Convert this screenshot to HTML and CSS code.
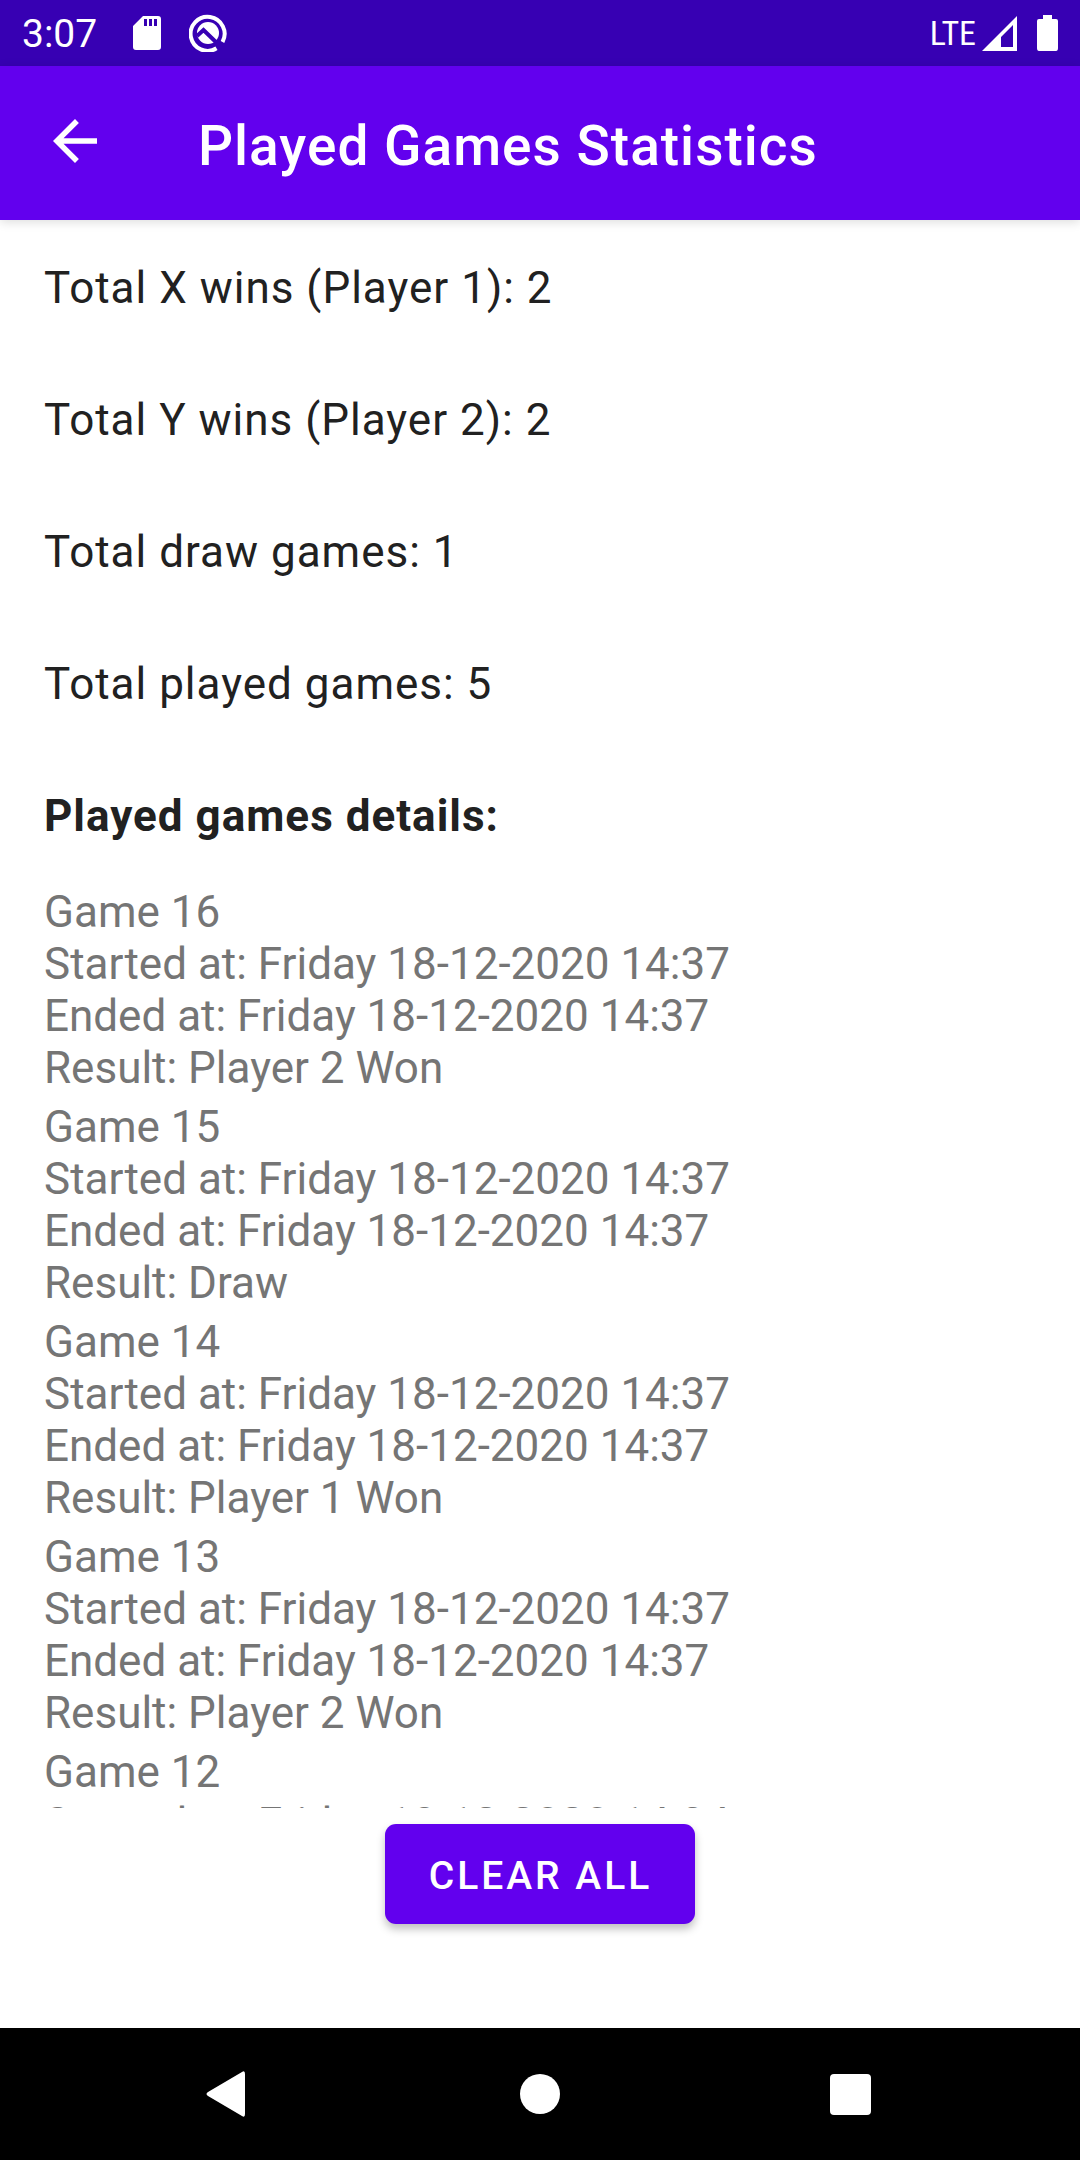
FILE: index.html
```html
<!DOCTYPE html>
<html lang="en">
<head>
<meta charset="utf-8">
<meta name="viewport" content="width=device-width, initial-scale=1">
<title>Played Games Statistics</title>
<link rel="stylesheet" href="styles.css">
</head>
<body>
<div class="status-bar">
  <div class="status-group">
    <span class="clock">3:07</span>
    <svg class="sd-icon" width="28" height="36" viewBox="0 0 28 36" aria-hidden="true"><path fill="#fff" fill-rule="evenodd" d="M10 1H25Q28 1 28 4V32Q28 35 25 35H3Q0 35 0 32V11ZM11 4V11H14V4ZM16 4V11H19V4ZM21 4V11H24V4Z"/></svg>
    <svg width="38" height="38" viewBox="0 0 38 38" aria-hidden="true"><path d="M27.500 34.300A17 17 0 1 1 33.500 28" fill="none" stroke="#fff" stroke-width="4"/><circle cx="19" cy="19" r="11" fill="#fff"/><path d="M8 22L14.500 16L31 32" fill="none" stroke="#3700b3" stroke-width="4"/></svg>
  </div>
  <div class="status-group status-right">
    <span class="network">LTE</span>
    <svg class="signal-icon" width="35" height="35" viewBox="0 0 35 35" aria-hidden="true"><path fill="#fff" fill-rule="evenodd" d="M35 0V35H0ZM31 9L19 21V31H31Z"/></svg>
    <svg width="21" height="36" viewBox="0 0 21 36" aria-hidden="true"><path fill="#fff" d="M6 0H15V4H19Q21 4 21 6V33Q21 36 19 36H2Q0 36 0 33V6Q0 4 2 4H6Z"/></svg>
  </div>
</div>
<header class="app-bar">
  <button class="icon-button" type="button" aria-label="Back"><svg width="66" height="66" viewBox="0 0 24 24" aria-hidden="true"><path fill="#fff" d="M20 11H7.83l5.59-5.59L12 4l-8 8 8 8 1.41-1.41L7.83 13H20z"/></svg></button>
  <h1 class="title">Played Games Statistics</h1>
</header>
<main class="content">
  <div class="totals">
    <p>Total X wins (Player 1): 2</p>
    <p>Total Y wins (Player 2): 2</p>
    <p>Total draw games: 1</p>
    <p>Total played games: 5</p>
    <h2>Played games details:</h2>
  </div>
  <ul class="games">
    <li><p>Game 16</p><p>Started at: Friday 18-12-2020 14:37</p><p>Ended at: Friday 18-12-2020 14:37</p><p>Result: Player 2 Won</p></li>
    <li><p>Game 15</p><p>Started at: Friday 18-12-2020 14:37</p><p>Ended at: Friday 18-12-2020 14:37</p><p>Result: Draw</p></li>
    <li><p>Game 14</p><p>Started at: Friday 18-12-2020 14:37</p><p>Ended at: Friday 18-12-2020 14:37</p><p>Result: Player 1 Won</p></li>
    <li><p>Game 13</p><p>Started at: Friday 18-12-2020 14:37</p><p>Ended at: Friday 18-12-2020 14:37</p><p>Result: Player 2 Won</p></li>
    <li><p>Game 12</p><p>Started at: Friday 18-12-2020 14:34</p></li>
  </ul>
  <button class="clear-button" type="button">CLEAR ALL</button>
</main>
<nav class="nav-bar" aria-label="System navigation">
  <button type="button" aria-label="Back"><svg width="50" height="46" viewBox="0 0 50 46" aria-hidden="true"><path fill="#fff" d="M37 1Q40 -1 40 3V43Q40 47 37 45L3 25Q0 23 3 21Z"/></svg></button>
  <button type="button" aria-label="Home"><svg width="40" height="40" viewBox="0 0 40 40" aria-hidden="true"><circle cx="20" cy="20" r="20" fill="#fff"/></svg></button>
  <button type="button" aria-label="Recent apps"><svg width="41" height="41" viewBox="0 0 41 41" aria-hidden="true"><rect width="41" height="41" rx="4" fill="#fff"/></svg></button>
</nav>
</body>
</html>
```
FILE: styles.css
```css
* { box-sizing: border-box; margin: 0; padding: 0; }
body {
  display: flex;
  flex-direction: column;
  height: 100vh;
  background: #fff;
  color: #212121;
  font-family: Roboto, "Liberation Sans", sans-serif;
  font-size: 44px;
  line-height: 52px;
}
button { border: 0; background: none; color: inherit; font: inherit; cursor: pointer; }
svg { display: block; }

.status-bar {
  display: flex;
  flex: none;
  justify-content: space-between;
  align-items: center;
  height: 66px;
  padding: 0 22px;
  background: #3700b3;
  color: #fff;
}
.status-group { display: flex; align-items: center; gap: 28px; }
.status-right { gap: 6px; }
.clock { margin-right: 8px; padding-top: 2px; font-size: 39px; }
.network { font-family: "Roboto Condensed", "Liberation Sans Narrow", Roboto, sans-serif; font-size: 34px; line-height: 40px; }
.signal-icon { margin-right: 14px; }

.app-bar {
  position: relative;
  display: flex;
  flex: none;
  align-items: flex-start;
  gap: 90px;
  min-height: 154px;
  padding: 42px 42px 0;
  background: #6200ee;
  color: #fff;
  box-shadow: 0 2px 10px rgba(0, 0, 0, 0.14);
}
.icon-button { flex: none; }
.title { font-size: 55px; font-weight: 500; line-height: 76px; letter-spacing: 1px; }

.content {
  display: flex;
  flex: 1;
  flex-direction: column;
  min-height: 0;
  padding: 42px 44px 104px;
}
.totals { display: flex; flex: none; flex-direction: column; gap: 80px; letter-spacing: 1px; }
.totals h2 { font-size: 44px; font-weight: 700; }
.games {
  flex: 1;
  min-height: 0;
  margin-top: 44px;
  overflow-y: auto;
  scrollbar-width: none;
  color: #757575;
  list-style: none;
}
.games li { margin-bottom: 7px; }
.clear-button {
  flex: none;
  align-self: center;
  height: 100px;
  margin-top: 16px;
  padding: 3px 43px 0 44px;
  border-radius: 11px;
  background: #6200ee;
  color: #fff;
  font-size: 39px;
  font-weight: 500;
  letter-spacing: 3px;
  box-shadow: 0 5px 8px rgba(0, 0, 0, 0.25);
}

.nav-bar {
  display: flex;
  flex: none;
  justify-content: center;
  gap: 178px;
  height: 132px;
  background: #000;
}
.nav-bar button { display: flex; align-items: center; justify-content: center; width: 132px; }
```
